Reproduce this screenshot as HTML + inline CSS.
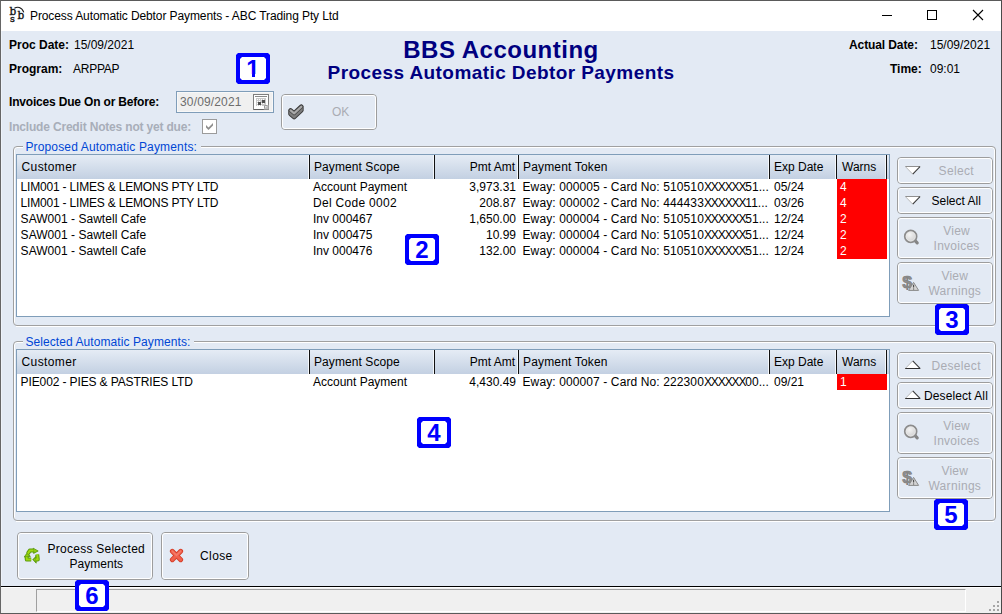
<!DOCTYPE html>
<html lang="en">
<head>
<meta charset="utf-8">
<title>Process Automatic Debtor Payments - ABC Trading Pty Ltd</title>
<style>
html,body{margin:0;padding:0;}
body{width:1002px;height:614px;overflow:hidden;background:#e3eaf4;font-family:"Liberation Sans",Arial,sans-serif;font-size:12px;color:#000;position:relative;}
.abs{position:absolute;}
.t{position:absolute;white-space:nowrap;line-height:14px;}
.b{font-weight:bold;}
#win{position:absolute;left:0;top:0;width:1002px;height:614px;box-sizing:border-box;border:1px solid #5a5a5a;border-left-color:#666;border-right-color:#4a4a4a;}
#titlebar{position:absolute;left:1px;top:1px;width:1000px;height:30px;background:#fff;}
#title{position:absolute;left:30px;top:9px;font-size:12px;line-height:15px;letter-spacing:-0.1px;white-space:nowrap;color:#000;}
.hd{position:absolute;left:0;width:1002px;text-align:center;color:#000080;font-weight:bold;white-space:nowrap;}
.etch-w{position:absolute;box-sizing:border-box;border:1px solid #fff;border-radius:4px;}
.etch-g{position:absolute;box-sizing:border-box;border:1px solid #a0a0a0;border-radius:4px;}
.legend{position:absolute;background:#e3eaf4;color:#0046d5;white-space:nowrap;line-height:14px;height:14px;padding:0 3px;}
.grid{position:absolute;box-sizing:border-box;border:1px solid #7f9db9;background:#fff;overflow:hidden;}
.ghead{position:absolute;left:0;top:0;height:24px;width:100%;background:linear-gradient(#e5ecf5,#c3d0e2);}
.sep{position:absolute;top:0;width:1px;height:24px;background:#111;}
.sepw{position:absolute;top:0;width:1px;height:24px;background:#f4f7fb;}
.hc{position:absolute;top:5px;line-height:14px;white-space:nowrap;}
.row{position:absolute;left:0;height:16px;width:100%;}
.c{position:absolute;top:1px;line-height:14px;white-space:nowrap;}
.warn{position:absolute;left:820px;top:0;width:50px;height:16px;background:#ff0000;color:#fff;}
.warn span{position:absolute;left:3px;top:1px;line-height:14px;}
.btn{position:absolute;box-sizing:border-box;border:1px solid #9d9d9d;border-radius:4px;}
.btn::before{content:"";position:absolute;left:0;top:0;right:0;bottom:0;border:1px solid #fff;border-radius:3px;}
.btn .lb{position:absolute;white-space:nowrap;line-height:15px;text-align:center;}
.dis{color:#aaacb3;}
.co{position:absolute;width:34px;height:31px;background:#0000ff;color:#0000ff;font-weight:bold;font-size:24px;line-height:31px;text-align:center;clip-path:polygon(2px 0,32px 0,34px 2px,34px 29px,32px 31px,2px 31px,0 29px,0 2px);}
.co::before{content:"";position:absolute;left:4px;top:4px;width:26px;height:23px;background:#fff;clip-path:polygon(2px 0,24px 0,26px 2px,26px 21px,24px 23px,2px 23px,0 21px,0 2px);}
.co span{position:relative;}
</style>
</head>
<body>
<div id="titlebar"></div>
<div id="title">Process Automatic Debtor Payments - ABC Trading Pty Ltd</div>
<svg class="abs" id="appicon" style="left:6px;top:3px" width="24" height="24" viewBox="0 0 24 24">
  <text x="3.6" y="11.7" font-family="DejaVu Serif,serif" font-size="10.5" fill="#111" stroke="#111" stroke-width="0.35">b</text>
  <text x="11.4" y="15.8" font-family="DejaVu Serif,serif" font-size="10.5" fill="#111" stroke="#111" stroke-width="0.35">b</text>
  <text x="4" y="18.8" font-family="DejaVu Serif,serif" font-size="9.5" fill="#111" stroke="#111" stroke-width="0.35">s</text>
  <path d="M8.4 5.3 C11.2 3.4 15.6 3.6 17.8 9.4" fill="none" stroke="#1a1a1a" stroke-width="1.1"/>
</svg>
<div class="abs" style="left:882px;top:15px;width:10px;height:1px;background:#000"></div>
<div class="abs" style="left:927px;top:10px;width:10px;height:10px;box-sizing:border-box;border:1px solid #000"></div>
<svg class="abs" style="left:972px;top:9px" width="12" height="12" viewBox="0 0 12 12"><path d="M1 1 L11 11 M11 1 L1 11" stroke="#000" stroke-width="1.1" fill="none"/></svg>
<div class="t b" id="l1" style="left:9px;top:38px">Proc Date:</div>
<div class="t" id="v1" style="left:74px;top:38px">15/09/2021</div>
<div class="t b" id="l2" style="left:9px;top:62px">Program:</div>
<div class="t" id="v2" style="left:73px;top:62px;letter-spacing:-0.25px">ARPPAP</div>
<div class="t b" id="l3" style="left:9px;top:95px;letter-spacing:-0.18px">Invoices Due On or Before:</div>
<div class="t b" id="l4" style="left:9px;top:120px;letter-spacing:-0.18px;color:#a8aeb9">Include Credit Notes not yet due:</div>
<div class="hd" id="h1" style="top:36px;font-size:24px;line-height:28px;letter-spacing:0.5px">BBS Accounting</div>
<div class="hd" id="h2" style="top:62px;font-size:19px;line-height:22px;letter-spacing:0.42px">Process Automatic Debtor Payments</div>
<div class="t b" id="r1" style="left:849px;top:38px;letter-spacing:-0.1px">Actual Date:</div>
<div class="t" id="rv1" style="left:930px;top:38px">15/09/2021</div>
<div class="t b" id="r2" style="left:890px;top:62px">Time:</div>
<div class="t" id="rv2" style="left:930px;top:62px">09:01</div>
<div class="abs" style="left:176px;top:91px;width:98px;height:22px;box-sizing:border-box;border:1px solid #7f9db9;background:#f0f0f0;box-shadow:inset 0 0 0 1px #f8f8f8"></div>
<div class="t" id="dt" style="left:180px;top:95px;letter-spacing:0.15px;color:#6d6d6d">30/09/2021</div>
<svg class="abs" style="left:253px;top:94px" width="16" height="16" viewBox="0 0 16 16">
<rect x="0.5" y="0.5" width="15" height="15" fill="#fff" stroke="#7e7e7e"/>
<path d="M1 15.5 H15" stroke="#606060" stroke-width="1"/>
<path d="M2 2.5 H14" stroke="#8a8a8a" stroke-width="1"/>
<rect x="3" y="4" width="10" height="8" fill="#c9c9c9"/>
<g fill="#fff"><rect x="4" y="5" width="1" height="1"/><rect x="6" y="5" width="1" height="1"/><rect x="8" y="5" width="1" height="1"/><rect x="10" y="5" width="1" height="1"/><rect x="4" y="7" width="1" height="1"/><rect x="6" y="7" width="1" height="1"/><rect x="8" y="9" width="1" height="1"/><rect x="10" y="9" width="1" height="1"/><rect x="4" y="9" width="1" height="1"/><rect x="4" y="11" width="1" height="1"/><rect x="6" y="11" width="1" height="1"/><rect x="8" y="11" width="1" height="1"/></g>
<rect x="5" y="8" width="3" height="3" fill="#4f4f4f"/><rect x="9" y="6" width="3" height="3" fill="#4f4f4f"/>
<path d="M11 15 L11 11.5 L15 11.5 L15 15 Z" fill="#e6e6e6"/>
<path d="M10.5 15.5 L15.5 10.5 L15.5 15.5 Z" fill="#bdbdbd"/>
<path d="M11.5 14.5 V11.5 H14.5" fill="none" stroke="#9a9a9a" stroke-width="1"/>
</svg>
<div class="abs" style="left:202px;top:119px;width:15px;height:15px;box-sizing:border-box;border:1px solid #9b9b9b;background:#fff"></div>
<svg class="abs" style="left:202px;top:119px" width="15" height="15" viewBox="0 0 15 15"><path d="M4 6 L6.5 8.5 L11 4 L11 6.6 L6.5 11.1 L4 8.6 Z" fill="#8e8e8e"/></svg>
<div class="btn" style="left:281px;top:94px;width:96px;height:36px"><svg class="abs" style="left:6px;top:9px" width="17" height="17" viewBox="0 0 17 17" fill="none" stroke-linecap="round" stroke-linejoin="round">
<g stroke="#3c3c3c" stroke-width="4.6"><path d="M2.6 6.4 L6.1 9.4 L13.3 2.7"/><path d="M2.6 6.4 L6.1 9.4 L13.3 2.7" transform="translate(0,1.8)"/><path d="M2.6 6.4 L6.1 9.4 L13.3 2.7" transform="translate(0,3.6)"/></g>
<g stroke="#7d7d7d" stroke-width="2.8"><path d="M2.6 6.4 L6.1 9.4 L13.3 2.7" transform="translate(0,1.2)"/><path d="M2.6 6.4 L6.1 9.4 L13.3 2.7" transform="translate(0,2.4)"/><path d="M2.6 6.4 L6.1 9.4 L13.3 2.7" transform="translate(0,3.6)"/></g>
<path d="M2.6 6.4 L6.1 9.4 L13.3 2.7" stroke="#444" stroke-width="3.6"/>
<path d="M2.6 6.4 L6.1 9.4 L13.3 2.7" stroke="#a9a9a9" stroke-width="2.2"/>
</svg><div class="lb dis" id="ok" style="left:50px;top:10px">OK</div></div>
<!-- group 1 -->
<div class="etch-w" style="left:14px;top:147px;width:981px;height:178px;border-bottom:none;border-radius:3px 3px 0 0"></div>
<div class="abs" style="left:16px;top:326px;width:978px;height:1px;background:#fff"></div>
<div class="etch-g" style="left:13px;top:146px;width:983px;height:180px"></div>
<div class="legend" id="lg1" style="left:23px;top:140px;padding:0 4px 0 2.4px;letter-spacing:0.15px">Proposed Automatic Payments:</div>
<div class="grid" id="grid1" style="left:16px;top:154px;width:874px;height:163px">
<div class="ghead">
<div class="sepw" style="left:291px"></div><div class="sep" style="left:292px"></div>
<div class="sepw" style="left:416px"></div><div class="sep" style="left:417px"></div>
<div class="sepw" style="left:500px"></div><div class="sep" style="left:501px"></div>
<div class="sepw" style="left:751px"></div><div class="sep" style="left:752px"></div>
<div class="sepw" style="left:818px"></div><div class="sep" style="left:819px"></div>
<div class="sepw" style="left:868px"></div><div class="sep" style="left:869px"></div>
<div class="hc" style="left:4.5px;letter-spacing:0.4px">Customer</div>
<div class="hc" style="left:297px;letter-spacing:0.08px">Payment Scope</div>
<div class="hc" style="right:374px">Pmt Amt</div>
<div class="hc" style="left:506px;letter-spacing:0.16px">Payment Token</div>
<div class="hc" style="left:757px">Exp Date</div>
<div class="hc" style="left:825px">Warns</div>
</div>
<div class="row" style="top:24px">
<div class="c" style="left:3.6px;letter-spacing:-0.19px">LIM001 - LIMES &amp; LEMONS PTY LTD</div>
<div class="c" style="left:296px">Account Payment</div>
<div class="c" style="right:373px">3,973.31</div>
<div class="c" style="left:505.5px;letter-spacing:0.11px">Eway: 000005 - Card No: 510510<span style="letter-spacing:-1.1px">XXXXXX</span><span style="letter-spacing:0">51...</span></div>
<div class="c" style="left:757px">05/24</div>
<div class="warn"><span>4</span></div>
</div>
<div class="row" style="top:40px">
<div class="c" style="left:3.6px;letter-spacing:-0.19px">LIM001 - LIMES &amp; LEMONS PTY LTD</div>
<div class="c" style="left:296px;letter-spacing:0.3px">Del Code 0002</div>
<div class="c" style="right:373px">208.87</div>
<div class="c" style="left:505.5px;letter-spacing:0.11px">Eway: 000002 - Card No: 444433<span style="letter-spacing:-1.1px">XXXXXX</span><span style="letter-spacing:0">11...</span></div>
<div class="c" style="left:757px">03/26</div>
<div class="warn"><span>4</span></div>
</div>
<div class="row" style="top:56px">
<div class="c" style="left:3.6px;letter-spacing:0.03px">SAW001 - Sawtell Cafe</div>
<div class="c" style="left:296px">Inv 000467</div>
<div class="c" style="right:373px">1,650.00</div>
<div class="c" style="left:505.5px;letter-spacing:0.11px">Eway: 000004 - Card No: 510510<span style="letter-spacing:-1.1px">XXXXXX</span><span style="letter-spacing:0">51...</span></div>
<div class="c" style="left:757px">12/24</div>
<div class="warn"><span>2</span></div>
</div>
<div class="row" style="top:72px">
<div class="c" style="left:3.6px;letter-spacing:0.03px">SAW001 - Sawtell Cafe</div>
<div class="c" style="left:296px">Inv 000475</div>
<div class="c" style="right:373px">10.99</div>
<div class="c" style="left:505.5px;letter-spacing:0.11px">Eway: 000004 - Card No: 510510<span style="letter-spacing:-1.1px">XXXXXX</span><span style="letter-spacing:0">51...</span></div>
<div class="c" style="left:757px">12/24</div>
<div class="warn"><span>2</span></div>
</div>
<div class="row" style="top:88px">
<div class="c" style="left:3.6px;letter-spacing:0.03px">SAW001 - Sawtell Cafe</div>
<div class="c" style="left:296px">Inv 000476</div>
<div class="c" style="right:373px">132.00</div>
<div class="c" style="left:505.5px;letter-spacing:0.11px">Eway: 000004 - Card No: 510510<span style="letter-spacing:-1.1px">XXXXXX</span><span style="letter-spacing:0">51...</span></div>
<div class="c" style="left:757px">12/24</div>
<div class="warn"><span>2</span></div>
</div>
</div>
<div class="btn" style="left:897px;top:157px;width:96px;height:27px"><svg class="abs" style="left:7px;top:8px" width="16" height="9" viewBox="0 0 16 9"><path d="M0.5 0.5 L15 0.5 L7.75 8 Z" fill="#fff"/><path d="M0.3 0.5 H15.2" stroke="#8f8f8f" stroke-width="1"/><path d="M0.6 0.8 L7.75 8.2" stroke="#b9b9b9" stroke-width="1"/><path d="M15 0.6 L7.75 8.2" stroke="#3a3a3a" stroke-width="1.1"/></svg><div class="lb dis" style="left:40.6px;letter-spacing:0.35px;top:6px">Select</div></div>
<div class="btn" style="left:897px;top:187px;width:96px;height:27px"><svg class="abs" style="left:7px;top:8px" width="16" height="9" viewBox="0 0 16 9"><path d="M0.5 0.5 L15 0.5 L7.75 8 Z" fill="#fff"/><path d="M0.3 0.5 H15.2" stroke="#8f8f8f" stroke-width="1"/><path d="M0.6 0.8 L7.75 8.2" stroke="#b9b9b9" stroke-width="1"/><path d="M15 0.6 L7.75 8.2" stroke="#3a3a3a" stroke-width="1.1"/></svg><div class="lb" style="left:33.5px;top:6px">Select All</div></div>
<div class="btn" style="left:897px;top:217px;width:96px;height:42px"><svg class="abs" style="left:4px;top:10px" width="20" height="20" viewBox="0 0 20 20"><defs><radialGradient id="mg" cx="0.4" cy="0.35" r="0.7"><stop offset="0" stop-color="#f4f4f4"/><stop offset="1" stop-color="#cdcdcd"/></radialGradient></defs><path d="M12.8 12.4 L15.2 14.8" stroke="#858585" stroke-width="3.2" stroke-linecap="round"/><circle cx="8.7" cy="8.4" r="5.9" fill="url(#mg)" stroke="#8c8c8c" stroke-width="1.8"/><circle cx="8.7" cy="8.4" r="4.6" fill="none" stroke="#e9e9e9" stroke-width="0.8"/></svg><div class="lb dis" style="left:28.6px;top:6px;width:60px;letter-spacing:0.25px">View<br>Invoices</div></div>
<div class="btn" style="left:897px;top:262px;width:96px;height:42px"><svg class="abs" style="left:3px;top:11px" width="22" height="20" viewBox="0 0 22 20"><text transform="translate(1.2,14) scale(1.12,1)" font-family="Liberation Sans,sans-serif" font-weight="bold" font-size="16" fill="#8f8f8f" stroke="#7a7a7a" stroke-width="0.6">$</text><path d="M12.6 8.4 L17.6 16.4 L7.6 16.4 Z" fill="#d4d4d4" stroke="#8a8a8a" stroke-width="1" stroke-linejoin="round"/><path d="M12.6 10.8 V13.6 M12.6 14.4 V15.4" stroke="#4a4a4a" stroke-width="1.1"/></svg><div class="lb dis" style="left:26.8px;top:6px;width:60px;letter-spacing:0.25px">View<br><span style="letter-spacing:0.32px">Warnings</span></div></div>
<!-- group 2 -->
<div class="etch-w" style="left:14px;top:342px;width:981px;height:178px;border-bottom:none;border-radius:3px 3px 0 0"></div>
<div class="abs" style="left:16px;top:521px;width:978px;height:1px;background:#fff"></div>
<div class="etch-g" style="left:13px;top:341px;width:983px;height:180px"></div>
<div class="legend" id="lg2" style="left:23px;top:335px;padding:0 4px 0 2.4px;letter-spacing:0.08px">Selected Automatic Payments:</div>
<div class="grid" id="grid2" style="left:16px;top:349px;width:874px;height:163px">
<div class="ghead">
<div class="sepw" style="left:291px"></div><div class="sep" style="left:292px"></div>
<div class="sepw" style="left:416px"></div><div class="sep" style="left:417px"></div>
<div class="sepw" style="left:500px"></div><div class="sep" style="left:501px"></div>
<div class="sepw" style="left:751px"></div><div class="sep" style="left:752px"></div>
<div class="sepw" style="left:818px"></div><div class="sep" style="left:819px"></div>
<div class="sepw" style="left:868px"></div><div class="sep" style="left:869px"></div>
<div class="hc" style="left:4.5px;letter-spacing:0.4px">Customer</div>
<div class="hc" style="left:297px;letter-spacing:0.08px">Payment Scope</div>
<div class="hc" style="right:374px">Pmt Amt</div>
<div class="hc" style="left:506px;letter-spacing:0.16px">Payment Token</div>
<div class="hc" style="left:757px">Exp Date</div>
<div class="hc" style="left:825px">Warns</div>
</div>
<div class="row" style="top:24px">
<div class="c" style="left:3.6px;letter-spacing:-0.12px">PIE002 - PIES &amp; PASTRIES LTD</div>
<div class="c" style="left:296px">Account Payment</div>
<div class="c" style="right:373px">4,430.49</div>
<div class="c" style="left:505.5px;letter-spacing:0.11px">Eway: 000007 - Card No: 222300<span style="letter-spacing:-1.1px">XXXXXX</span><span style="letter-spacing:0">00...</span></div>
<div class="c" style="left:757px">09/21</div>
<div class="warn"><span>1</span></div>
</div>
</div>
<div class="btn" style="left:897px;top:352px;width:96px;height:27px"><svg class="abs" style="left:7px;top:7px" width="16" height="10" viewBox="0 0 16 10"><path d="M0.5 8.5 L15 8.5 L7.75 1 Z" fill="#fff"/><path d="M0.6 8.2 L7.75 0.8" stroke="#b9b9b9" stroke-width="1"/><path d="M15 8.3 L7.75 0.8" stroke="#3a3a3a" stroke-width="1.1"/><path d="M0.2 8.5 H15.3" stroke="#2e2e2e" stroke-width="1"/></svg><div class="lb dis" style="left:33.4px;letter-spacing:0.35px;top:6px">Deselect</div></div>
<div class="btn" style="left:897px;top:382px;width:96px;height:27px"><svg class="abs" style="left:7px;top:7px" width="16" height="10" viewBox="0 0 16 10"><path d="M0.5 8.5 L15 8.5 L7.75 1 Z" fill="#fff"/><path d="M0.6 8.2 L7.75 0.8" stroke="#b9b9b9" stroke-width="1"/><path d="M15 8.3 L7.75 0.8" stroke="#3a3a3a" stroke-width="1.1"/><path d="M0.2 8.5 H15.3" stroke="#2e2e2e" stroke-width="1"/></svg><div class="lb" style="left:26px;letter-spacing:0.1px;top:6px">Deselect All</div></div>
<div class="btn" style="left:897px;top:412px;width:96px;height:42px"><svg class="abs" style="left:4px;top:10px" width="20" height="20" viewBox="0 0 20 20"><defs><radialGradient id="mg" cx="0.4" cy="0.35" r="0.7"><stop offset="0" stop-color="#f4f4f4"/><stop offset="1" stop-color="#cdcdcd"/></radialGradient></defs><path d="M12.8 12.4 L15.2 14.8" stroke="#858585" stroke-width="3.2" stroke-linecap="round"/><circle cx="8.7" cy="8.4" r="5.9" fill="url(#mg)" stroke="#8c8c8c" stroke-width="1.8"/><circle cx="8.7" cy="8.4" r="4.6" fill="none" stroke="#e9e9e9" stroke-width="0.8"/></svg><div class="lb dis" style="left:28.6px;top:6px;width:60px;letter-spacing:0.25px">View<br>Invoices</div></div>
<div class="btn" style="left:897px;top:457px;width:96px;height:42px"><svg class="abs" style="left:3px;top:11px" width="22" height="20" viewBox="0 0 22 20"><text transform="translate(1.2,14) scale(1.12,1)" font-family="Liberation Sans,sans-serif" font-weight="bold" font-size="16" fill="#8f8f8f" stroke="#7a7a7a" stroke-width="0.6">$</text><path d="M12.6 8.4 L17.6 16.4 L7.6 16.4 Z" fill="#d4d4d4" stroke="#8a8a8a" stroke-width="1" stroke-linejoin="round"/><path d="M12.6 10.8 V13.6 M12.6 14.4 V15.4" stroke="#4a4a4a" stroke-width="1.1"/></svg><div class="lb dis" style="left:26.8px;top:6px;width:60px;letter-spacing:0.25px">View<br><span style="letter-spacing:0.32px">Warnings</span></div></div>
<div class="btn" style="left:17px;top:532px;width:136px;height:48px"><svg class="abs" style="left:5px;top:14px;overflow:visible" width="18" height="18" viewBox="-1 -1 18 18"><g fill="none" stroke="#5a9a0c" stroke-width="4" stroke-linejoin="round" stroke-linecap="butt"><path d="M3.8 5.6 L5.8 2.6 L9.6 2.6"/><path d="M13.2 6.4 L13.8 11.6 L12 11.6"/><path d="M7.2 11.6 L2.8 11.6 L2.6 8.8"/></g><g fill="#5a9a0c" stroke="#5a9a0c" stroke-width="0.8" stroke-linejoin="round"><path d="M9.2 0.2 L14.2 3 L9.6 5.4 Z"/><path d="M8.8 11.6 L12.2 8.2 L12.2 15.2 Z"/><path d="M3.2 4.8 L0.2 9 L6.4 8.4 Z"/></g><g fill="none" stroke="#9fd80f" stroke-width="2" stroke-linejoin="round"><path d="M3.8 5.6 L5.8 2.6 L9.6 2.6"/><path d="M13.2 6.4 L13.8 11.6 L12 11.6"/><path d="M7.2 11.6 L2.8 11.6 L2.6 8.8"/></g><g fill="#93cf10"><path d="M10 1 L13.4 3 L10.2 4.6 Z"/><path d="M9.8 11.8 L11.6 9.8 L11.6 13.8 Z"/><path d="M3.1 5.8 L1.2 8.2 L5.2 7.9 Z"/></g></svg>
<div class="lb" style="left:25px;top:9px;width:106.6px;letter-spacing:0.25px">Process Selected<br><span style="letter-spacing:0.05px">Payments</span></div></div>
<div class="btn" style="left:161px;top:532px;width:88px;height:48px"><svg class="abs" style="left:7px;top:15px" width="16" height="16" viewBox="0 0 16 16"><path d="M3.3 3.3 L11.7 11.7 M11.7 3.3 L3.3 11.7" stroke="#d43c26" stroke-width="4.8" stroke-linecap="round"/><path d="M3.3 3.3 L11.7 11.7 M11.7 3.3 L3.3 11.7" stroke="#f0604c" stroke-width="3.2" stroke-linecap="round"/><path d="M3.4 3.2 L7.5 7.3 L11.6 3.2" fill="none" stroke="#f47a68" stroke-width="1.6" stroke-linecap="round"/></svg>
<div class="lb" style="left:38px;top:16px;letter-spacing:0.4px">Close</div></div>
<div class="abs" style="left:1px;top:586px;width:1000px;height:1px;background:#000"></div>
<div class="abs" style="left:1px;top:587px;width:1000px;height:1px;background:#fff"></div>
<div class="abs" style="left:1px;top:588px;width:1000px;height:25px;background:#f0f0f0"></div>
<div class="abs" style="left:36px;top:589px;width:930px;height:23px;box-sizing:border-box;border-left:1px solid #a0a0a0;border-top:1px solid #a0a0a0;border-right:1px solid #fff;border-bottom:1px solid #fff"></div>
<svg class="abs" style="left:988px;top:600px" width="13" height="13" viewBox="0 0 13 13"><g fill="#a5a5a5"><rect x="9" y="1" width="2" height="2"/><rect x="5" y="5" width="2" height="2"/><rect x="9" y="5" width="2" height="2"/><rect x="1" y="9" width="2" height="2"/><rect x="5" y="9" width="2" height="2"/><rect x="9" y="9" width="2" height="2"/></g></svg>
<div class="co" style="left:236px;top:53px"><span>1</span><i style="position:absolute;left:11px;top:20.6px;width:4.9px;height:4px;background:#fff"></i><i style="position:absolute;left:19.4px;top:20.6px;width:5px;height:4px;background:#fff"></i></div>
<div class="co" style="left:405px;top:234px"><span>2</span></div>
<div class="co" style="left:935px;top:304px"><span>3</span></div>
<div class="co" style="left:417px;top:417px"><span>4</span></div>
<div class="co" style="left:934px;top:499px"><span>5</span></div>
<div class="co" style="left:75px;top:580px"><span>6</span></div>
<div class="abs" style="left:1px;top:31px;width:1px;height:555px;background:#eef3fa"></div>
<div id="win"></div>
</body>
</html>
